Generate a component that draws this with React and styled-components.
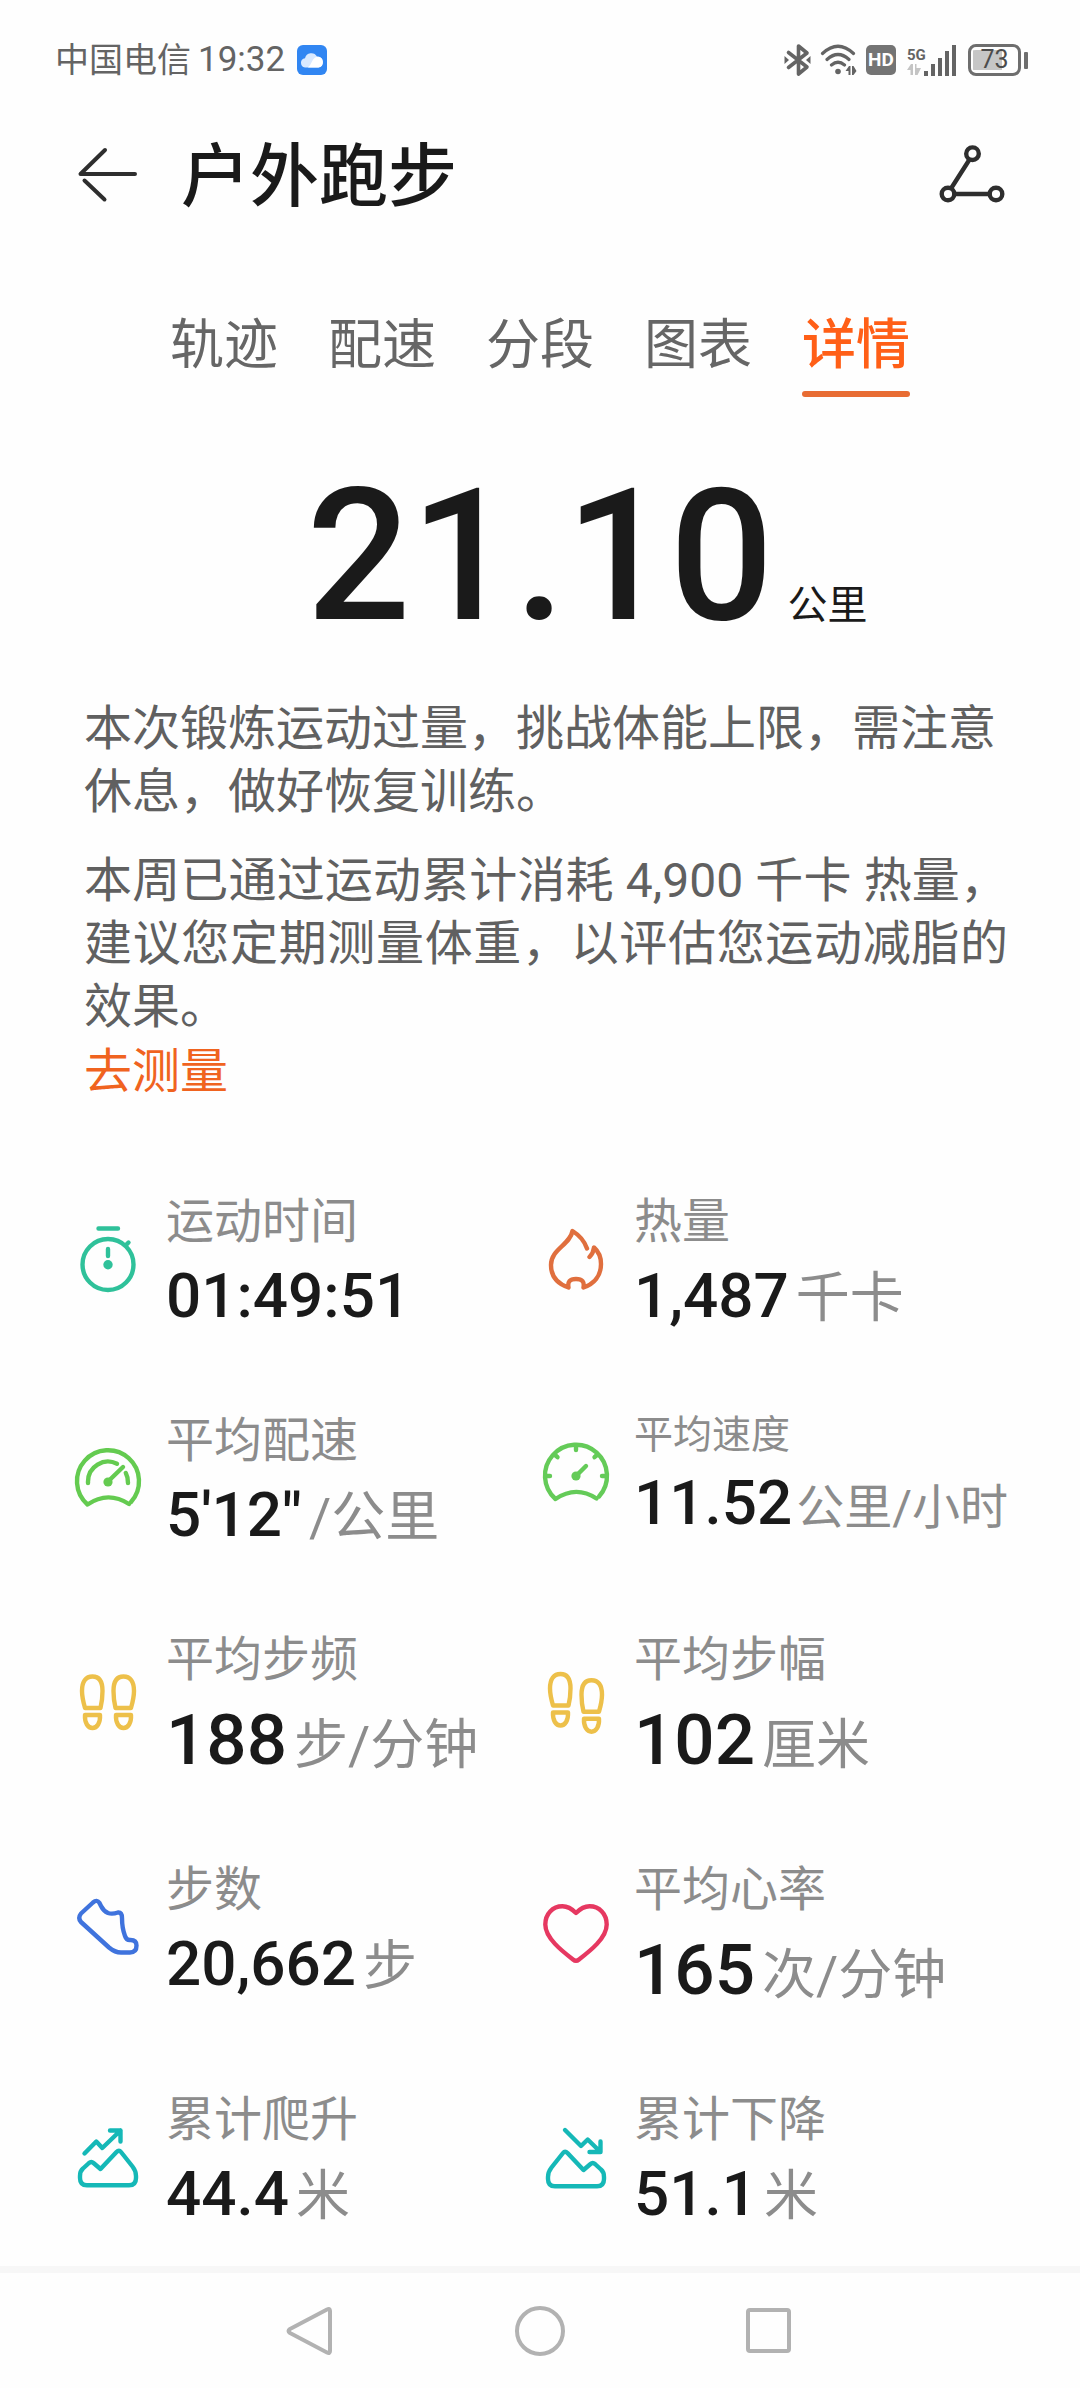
import React, { useState } from 'react';
import styled, { createGlobalStyle } from 'styled-components';

const GlobalStyle = createGlobalStyle`
    * {
        box-sizing: border-box;
    }
    body {
        margin: 0;
        background: #fefefe;
        color: #1a1a1a;
        font-family: Roboto, "Noto Sans CJK SC", sans-serif;
    }
    button {
        padding: 0;
        border: 0;
        background: none;
        color: inherit;
        font: inherit;
        cursor: pointer;
    }
`;

const Page = styled.div`
    display: flex;
    flex-direction: column;
    min-height: 100vh;
`;

const StatusBar = styled.div`
    display: flex;
    align-items: center;
    justify-content: space-between;
    height: 120px;
    padding: 0 52px 0 55px;
    color: #646464;
`;

const StatusGroup = styled.div`
    display: flex;
    align-items: center;
    gap: ${({ $gap }) => $gap}px;
`;

const Carrier = styled.span`
    font-size: 34px;
    line-height: 40px;
`;

const Clock = styled.span`
    margin-right: 5px;
    font-size: 35px;
    line-height: 40px;
`;

const HdBadge = styled.span`
    width: 30px;
    height: 30px;
    border-radius: 5px;
    background: #747474;
    color: #fefefe;
    font-size: 19px;
    font-weight: 700;
    line-height: 30px;
    text-align: center;
`;

const Network = styled.span`
    display: flex;
    flex-direction: column;
    align-items: flex-start;
    width: 17px;
    font-size: 15px;
    font-weight: 700;
    line-height: 18px;
`;

const Signal = styled.span`
    display: flex;
    align-items: flex-end;
    margin: 0 3px 0 2px;
`;

const Battery = styled.span`
    display: flex;
    align-items: center;
    gap: 3px;
    &::after {
        content: '';
        width: 4px;
        height: 17px;
        border-radius: 1px;
        background: #6e6e6e;
    }
`;

const BatteryBody = styled.span`
    width: 53px;
    height: 32px;
    border: 3px solid #6e6e6e;
    border-radius: 8px;
    background: linear-gradient(to right, transparent 2px, #c6c6c6 2px, #c6c6c6 31px, transparent 31px) content-box;
    padding: 3px 0;
    color: #4c4c4c;
    font-size: 25px;
    line-height: 20px;
    text-align: center;
`;

const Header = styled.header`
    display: flex;
    align-items: center;
    height: 110px;
    padding: 0 75px;
`;

const IconButton = styled.button`
    display: flex;
`;

const Title = styled.h1`
    flex: 1;
    margin: 0 0 0 42px;
    padding-top: 6px;
    font-size: 69px;
    font-weight: 500;
    line-height: 80px;
`;

const Tabs = styled.div`
    display: flex;
    justify-content: center;
    gap: 50px;
    margin-top: 85px;
`;

const Tab = styled.button`
    display: flex;
    flex-direction: column;
    gap: 14px;
    color: ${({ $active }) => ($active ? '#ff5f17' : '#666')};
    font-size: 54px;
    font-weight: ${({ $active }) => ($active ? 500 : 400)};
    line-height: 62px;
    &::after {
        content: '';
        width: 100%;
        height: 6px;
        border-radius: 3px;
        background: ${({ $active }) => ($active ? '#e86c33' : 'transparent')};
    }
`;

const Distance = styled.div`
    display: grid;
    grid-template-columns: 1fr auto 1fr;
    align-items: baseline;
    column-gap: 14px;
    margin-top: 65px;
`;

const DistanceValue = styled.strong`
    grid-column: 2;
    font-size: 183px;
    font-weight: 500;
    line-height: 190px;
`;

const DistanceUnit = styled.span`
    font-size: 40px;
    line-height: 48px;
`;

const Advice = styled.section`
    padding: 45px 72px 0 84px;
    color: #606060;
    font-size: 48px;
    line-height: 63px;
    p {
        margin: 0;
    }
    p + p {
        margin-top: 26px;
        text-align: justify;
    }
`;

const MeasureLink = styled.a`
    display: block;
    margin-top: 2px;
    color: #f0631f;
    text-decoration: none;
`;

const Metrics = styled.dl`
    display: grid;
    grid-template-columns: repeat(2, minmax(0, 1fr));
    align-items: start;
    row-gap: 72px;
    margin: 0;
    padding: 82px 72px 34px;
`;

const Metric = styled.div`
    display: flex;
    align-items: center;
    gap: 22px;
    white-space: nowrap;
`;

const MetricText = styled.div`
    padding-top: 6px;
`;

const Label = styled.dt`
    margin-bottom: 7px;
    color: #8c8c8c;
    font-size: ${({ $small }) => ($small ? 39 : 48)}px;
    line-height: ${({ $small }) => ($small ? 50 : 62)}px;
`;

const Value = styled.dd`
    display: flex;
    align-items: baseline;
    gap: ${({ $small }) => ($small ? 4 : 7)}px;
    height: ${({ $large }) => ($large ? 83 : 72)}px;
    margin: 0;
    font-size: ${({ $large }) => ($large ? 71 : 62)}px;
    font-weight: 500;
    line-height: ${({ $large }) => ($large ? 83 : 72)}px;
`;

const Unit = styled.span`
    color: #8c8c8c;
    font-size: ${({ $small }) => ($small ? 48 : 54)}px;
    font-weight: 400;
`;

const NavBar = styled.nav`
    display: flex;
    justify-content: center;
    align-items: center;
    gap: 158px;
    height: 122px;
    margin-top: auto;
    border-top: 7px solid #f7f7f7;
`;

const Glyph = styled.svg`
    display: block;
    flex: none;
    fill: none;
    stroke: ${({ $color }) => $color || '#2e2e2e'};
    stroke-width: ${({ $weight }) => $weight || 4.4}px;
    stroke-linecap: round;
    stroke-linejoin: round;
    .solid {
        fill: ${({ $color }) => $color || '#2e2e2e'};
        stroke: none;
    }
`;

const MetricIcon = ({ color, children }) => (
    <Glyph $color={color} width="72" height="72" viewBox="0 0 72 72" aria-hidden="true">
        {children}
    </Glyph>
);

const Footprint = () => (
    <>
        <path d="M13 42C11 35 10 30 10 25C10 15 14 10.5 20.5 10.5C27 10.5 30.5 15 30.5 25C30.5 31 30 36 28.5 42Z" />
        <path d="M13 49H28C28.5 57 25 62 20.5 62C16 62 12.5 57 13 49Z" />
    </>
);

const Mountain = () => (
    <path d="M8 57V55Q8 50 11 47.5L17 42Q19.3 40 21.5 42L28.5 48L44.5 31Q47 28.5 49 31L60.5 45.5Q64 50 64 55V57Q64 64.3 57 64.3H15Q8 64.3 8 57Z" />
);

const icons = {
    time: (
        <MetricIcon color="#2fc19a">
            <circle cx="36" cy="41.5" r="25.5" />
            <path d="M26.5 5.5H46M36 26V33M54.5 21.5L56.5 19.5" />
            <circle className="solid" cx="36" cy="41.7" r="4.7" />
        </MetricIcon>
    ),
    calories: (
        <MetricIcon color="#e06f3e">
            <path d="M47 25.5C44.5 18 39 12 32.5 8C30 22 11 26 11 42C11 54 18 61 28.5 64.5C27.5 59 29.5 56 36 56C42.5 56 44.5 59 43.5 64.5C54 61 61 53 61 41C61 34 58 28 54 24.5C53.5 29 52 31.5 49.5 34" />
        </MetricIcon>
    ),
    pace: (
        <MetricIcon color="#64cb50">
            <path d="M59 60A31 31 0 1 0 15.5 62.5Q36 48.5 57 62" />
            <path d="M16 41V39.5A20 20 0 0 1 45 21.7M53.8 31Q56 35 56 41M51 25L36 39.5" />
            <circle className="solid" cx="36" cy="40" r="4.6" />
        </MetricIcon>
    ),
    speed: (
        <MetricIcon color="#64cb58">
            <path d="M59 60.5A31 31 0 1 0 15.5 63Q36 49 56.5 62.5" />
            <path d="M36 10V14M6 40H10M66 40H62M15 19L17.5 21.2M57 19L54.5 21.2M46 30L36 40" />
            <circle className="solid" cx="36" cy="40" r="4.6" />
        </MetricIcon>
    ),
    cadence: (
        <MetricIcon color="#edc04a">
            <Footprint />
            <g transform="translate(72 0) scale(-1 1)">
                <Footprint />
            </g>
        </MetricIcon>
    ),
    stride: (
        <MetricIcon color="#edc04a">
            <g transform="translate(0 -2.5)">
                <Footprint />
            </g>
            <g transform="translate(72 3.7) scale(-1 1)">
                <Footprint />
            </g>
        </MetricIcon>
    ),
    steps: (
        <MetricIcon color="#3f73dd">
            <path d="M21 11.5L9 22.5Q5.5 27 9 31L37 56.5Q43 61.5 49 61.5H58Q64.5 61.5 64.5 54.5Q64.5 49 58.5 49Q54.5 49.5 53 45Q50 37 50 27Q50 21 46 21.5Q40 23.5 36 22Q31.5 20 29 15L27.5 12Q25 8 21 11.5Z" />
        </MetricIcon>
    ),
    heart: (
        <MetricIcon color="#e63861">
            <path d="M36 17C32 13 28 10.3 22.5 10.3C12.5 10.3 5.3 18 5.3 28.5C5.3 42 22 55 33 63.5Q36 66 39 63.5C50 55 66.7 42 66.7 28.5C66.7 18 59.5 10.3 49.5 10.3C44 10.3 40 13 36 17Z" />
        </MetricIcon>
    ),
    ascent: (
        <MetricIcon color="#15b8b7">
            <path d="M12.5 32.5L24.3 20.5L30.3 27L48.5 9.5M38 9.5H48.5V20.5" />
            <Mountain />
        </MetricIcon>
    ),
    descent: (
        <MetricIcon color="#15b8b7">
            <path d="M25 9L41 25L47.7 18.5L60.5 31M49.5 31H60.5V20.5" />
            <g transform="translate(72 1) scale(-1 1)">
                <Mountain />
            </g>
        </MetricIcon>
    ),
};

const tabs = ['轨迹', '配速', '分段', '图表', '详情'];

const metrics = [
    { icon: 'time', label: '运动时间', value: '01:49:51' },
    { icon: 'calories', label: '热量', value: '1,487', unit: '千卡' },
    { icon: 'pace', label: '平均配速', value: '5\'12"', unit: '/公里' },
    { icon: 'speed', label: '平均速度', value: '11.52', unit: '公里/小时', small: true },
    { icon: 'cadence', label: '平均步频', value: '188', unit: '步/分钟', large: true },
    { icon: 'stride', label: '平均步幅', value: '102', unit: '厘米', large: true },
    { icon: 'steps', label: '步数', value: '20,662', unit: '步' },
    { icon: 'heart', label: '平均心率', value: '165', unit: '次/分钟', large: true },
    { icon: 'ascent', label: '累计爬升', value: '44.4', unit: '米' },
    { icon: 'descent', label: '累计下降', value: '51.1', unit: '米' },
];

const CloudIcon = () => (
    <svg width="30" height="30" viewBox="0 0 30 30" aria-hidden="true">
        <rect width="30" height="30" rx="6" fill="#3186f2" />
        <path d="M8 22.5A4.7 4.7 0 0 1 8 13.2A6.5 6.5 0 0 1 20 11.5A5.6 5.6 0 0 1 21.5 22.5Z" fill="#d9e9ff" />
        <path d="M11 22.5Q13 21 15 16.5Q17 11.8 21 11.8A5.4 5.4 0 0 1 21.5 22.5Z" fill="#fff" />
    </svg>
);

const StatusIcons = () => (
    <StatusGroup $gap={9}>
        <Glyph $color="#646464" $weight={3.6} width="27" height="34" viewBox="0 0 26 34" aria-label="蓝牙">
            <path d="M4 9.5L22.5 24L14 31V3L22.5 10L4 24.5" />
            <path className="solid" d="M0 13L4.5 17L0 21ZM26 13L21.5 17L26 21Z" />
        </Glyph>
        <Glyph $color="#646464" $weight={3.2} width="37" height="32" viewBox="0 0 36 32" aria-label="WLAN">
            <path d="M2 9.5Q17.5 -5 33 9.5M6.5 15.5Q17.5 5.5 28.5 15.5M11 21Q17.5 15.5 24 21" />
            <circle className="solid" cx="17.5" cy="27.5" r="2.8" />
            <path className="solid" d="M25 27L28.5 22H30V31H28V27ZM31.5 22H33L36 27L33 31H31.5Z" />
        </Glyph>
        <HdBadge>HD</HdBadge>
        <Signal>
            <Network>
                5G
                <Glyph $color="#c4c4c4" width="14" height="12" viewBox="0 0 14 12" aria-hidden="true">
                    <path className="solid" d="M0 6L4 0H6V11H3.5V6ZM8 0H9.5V4H14L10.5 11H8Z" />
                </Glyph>
            </Network>
            <Glyph $color="#646464" width="32" height="31" viewBox="0 0 32 31" aria-label="信号">
                <path className="solid" d="M0 26H4V31H0ZM7 19H11V31H7ZM14 13H18V31H14ZM21 6H25V31H21ZM28 0H32V31H28Z" />
            </Glyph>
        </Signal>
        <Battery>
            <BatteryBody>73</BatteryBody>
        </Battery>
    </StatusGroup>
);

const App = () => {
    const [current, setCurrent] = useState('详情');

    return (
        <Page>
            <GlobalStyle />
            <StatusBar>
                <StatusGroup $gap={7}>
                    <Carrier>中国电信</Carrier>
                    <Clock>19:32</Clock>
                    <CloudIcon />
                </StatusGroup>
                <StatusIcons />
            </StatusBar>

            <Header>
                <IconButton aria-label="返回">
                    <Glyph $weight={4} width="64" height="60" viewBox="0 0 64 60">
                        <path d="M60 29H5.5L30 5M9.5 35.5L29.5 54.5" />
                    </Glyph>
                </IconButton>
                <Title>户外跑步</Title>
                <IconButton aria-label="分享">
                    <Glyph width="66" height="60" viewBox="0 0 66 60">
                        <circle cx="33.5" cy="8.7" r="6.3" />
                        <circle cx="9" cy="49" r="6.3" />
                        <circle cx="57" cy="49" r="6.3" />
                        <path d="M30.2 15L12.5 42.7M16 49H50" />
                    </Glyph>
                </IconButton>
            </Header>

            <Tabs role="tablist">
                {tabs.map((tab) => (
                    <Tab
                        key={tab}
                        role="tab"
                        aria-selected={tab === current}
                        $active={tab === current}
                        onClick={() => setCurrent(tab)}
                    >
                        {tab}
                    </Tab>
                ))}
            </Tabs>

            <Distance>
                <DistanceValue>21.10</DistanceValue>
                <DistanceUnit>公里</DistanceUnit>
            </Distance>

            <Advice>
                <p>本次锻炼运动过量，挑战体能上限，需注意休息，做好恢复训练。</p>
                <p>本周已通过运动累计消耗 4,900 千卡 热量，建议您定期测量体重，以评估您运动减脂的效果。</p>
                <MeasureLink href="#measure">去测量</MeasureLink>
            </Advice>

            <Metrics>
                {metrics.map(({ icon, label, value, unit, small, large }) => (
                    <Metric key={label}>
                        {icons[icon]}
                        <MetricText>
                            <Label $small={small}>{label}</Label>
                            <Value $small={small} $large={large}>
                                {value}
                                {unit && <Unit $small={small}>{unit}</Unit>}
                            </Value>
                        </MetricText>
                    </Metric>
                ))}
            </Metrics>

            <NavBar>
                <IconButton aria-label="后退">
                    <Glyph $color="#b2b2b2" $weight={4} width="72" height="72" viewBox="0 0 72 72">
                        <path d="M53 14.5Q56 13 56 16V56Q56 59 53 57.5L16 38Q13 36 16 34Z" />
                    </Glyph>
                </IconButton>
                <IconButton aria-label="主屏幕">
                    <Glyph $color="#b2b2b2" $weight={4} width="72" height="72" viewBox="0 0 72 72">
                        <circle cx="36" cy="36" r="23" />
                    </Glyph>
                </IconButton>
                <IconButton aria-label="最近任务">
                    <Glyph $color="#b2b2b2" $weight={4} width="72" height="72" viewBox="0 0 72 72">
                        <rect x="14" y="15" width="41" height="41" rx="2" />
                    </Glyph>
                </IconButton>
            </NavBar>
        </Page>
    );
};

export default App;
